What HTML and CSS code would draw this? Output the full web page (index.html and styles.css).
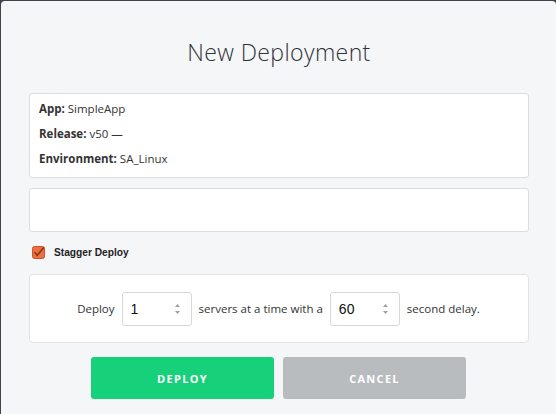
FILE: index.html
```html
<!DOCTYPE html>
<html>
<head>
<meta charset="utf-8">
<link rel="stylesheet" href="styles.css">
</head>
<body>
<div class="modal">
  <h1 class="title">New Deployment</h1>
  <div class="info">
    <div class="line"><b>App:</b> SimpleApp</div>
    <div class="line"><b>Release:</b> v50 —</div>
    <div class="line"><b>Environment:</b> SA_Linux</div>
  </div>
  <div class="notes"></div>
  <label class="check">
    <svg class="cb" width="13" height="13" viewBox="0 0 13 13">
      <rect x="0.5" y="0.5" width="12" height="12" rx="2" fill="#ec6f42" stroke="#c9552c"/>
      <path d="M2.5 6.2 L5.3 9.2 L11.8 1.5" fill="none" stroke="#8a3417" stroke-width="1.6"/>
    </svg>
    <span>Stagger Deploy</span>
  </label>
  <div class="stagger">
    <span>Deploy</span>
    <div class="num"><span class="val">1</span><svg class="spin" width="7" height="12" viewBox="0 0 7 12"><path d="M3.5 1 L6 4 L1 4 Z" fill="#9aa0a6"/><path d="M3.5 11 L6 8 L1 8 Z" fill="#9aa0a6"/></svg></div>
    <span>servers at a time with a</span>
    <div class="num"><span class="val">60</span><svg class="spin" width="7" height="12" viewBox="0 0 7 12"><path d="M3.5 1 L6 4 L1 4 Z" fill="#9aa0a6"/><path d="M3.5 11 L6 8 L1 8 Z" fill="#9aa0a6"/></svg></div>
    <span>second delay.</span>
  </div>
  <div class="actions">
    <button class="btn deploy">DEPLOY</button>
    <button class="btn cancel">CANCEL</button>
  </div>
</div>
</body>
</html>
```

FILE: styles.css
```css
html, body {
  margin: 0;
  padding: 0;
  background: #3f434b;
  height: 414px;
  overflow: hidden;
}
.modal {
  margin: 1px 0 0 1px;
  height: 413px;
  box-sizing: border-box;
  background: #f5f6f8;
  border-radius: 4px 4px 0 0;
  padding: 0 27px 0 28px;
  font-family: "Open Sans", sans-serif;
  color: #333;
}
.title {
  margin: 0;
  padding-top: 36px;
  height: 56px;
  font-size: 23px;
  font-weight: 300;
  text-align: center;
  line-height: 30px;
  color: #2f3237;
  letter-spacing: 0.4px;
}
.info {
  background: #fff;
  border: 1px solid #dcdde0;
  border-radius: 3px;
  padding: 2px 9px 6px;
  font-size: 11.5px;
}
.line {
  line-height: 25px;
  height: 25px;
}
.line b { font-weight: 700; }
.notes {
  margin-top: 10px;
  height: 42px;
  background: #fff;
  border: 1px solid #dcdde0;
  border-radius: 3px;
}
.check {
  display: flex;
  align-items: center;
  margin: 13px 0 0 4px;
  height: 14px;
  font-family: "Liberation Sans", Arial, sans-serif;
  font-weight: 700;
  font-size: 10.2px;
  color: #222;
}
.cb { margin-right: 9px; margin-left: -1px; }
.stagger {
  margin-top: 15px;
  height: 67px;
  background: #fff;
  border: 1px solid #e2e3e6;
  border-radius: 4px;
  display: flex;
  align-items: center;
  justify-content: center;
  gap: 7px;
  font-size: 11.5px;
  color: #333;
  padding-left: 1px;
  padding-right: 2px;
}
.num {
  height: 32px;
  border: 1px solid #d6d8db;
  border-radius: 3px;
  display: flex;
  align-items: center;
  justify-content: space-between;
  padding: 0 10px 0 8px;
  box-sizing: content-box;
  width: 50px;
  font-family: "Liberation Sans", Arial, sans-serif;
  font-size: 14px;
  color: #111;
}
.actions {
  margin-top: 14px;
  display: flex;
  justify-content: center;
  gap: 9px;
  padding-right: 1px;
}
.btn {
  width: 183px;
  height: 42px;
  border: none;
  border-radius: 3px;
  color: #fff;
  font-family: "Open Sans", sans-serif;
  font-weight: 700;
  font-size: 11px;
  letter-spacing: 1.3px;
}
.deploy { background: #17d07a; }
.cancel { background: #b8bcbf; }
```
